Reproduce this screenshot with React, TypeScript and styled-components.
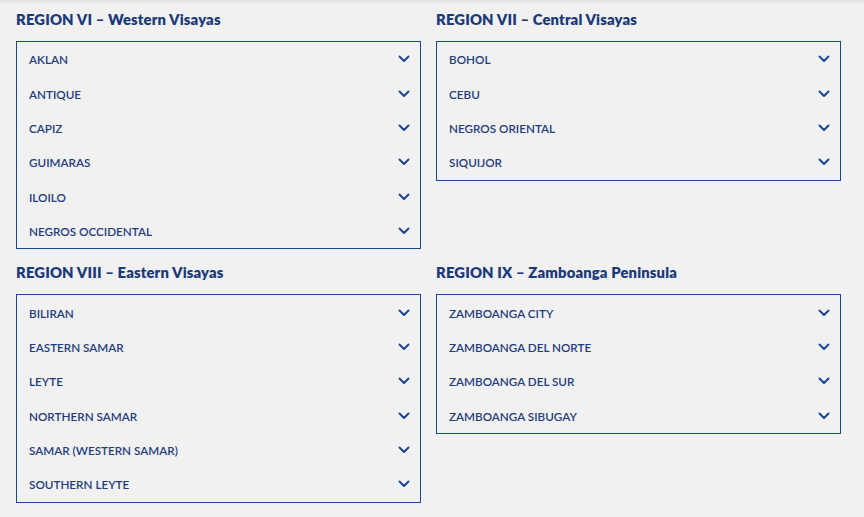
import React from "react";
import styled, { createGlobalStyle } from "styled-components";

const GlobalStyle = createGlobalStyle`
  html, body {
    margin: 0;
    padding: 0;
    background: #f1f1f1;
  }
  body {
    font-family: Lato, "Open Sans", Arial, sans-serif;
  }
`;

const Page = styled.div`
  min-height: 517px;
  box-sizing: border-box;
  padding: 9px 24px 0 16px;
  box-shadow: inset 0 5px 5px -3px rgba(0, 0, 0, 0.08);
`;

const Grid = styled.div`
  display: grid;
  grid-template-columns: 405px 405px;
  column-gap: 15px;
  row-gap: 13px;
  align-items: start;
`;

const Section = styled.section`
  display: flex;
  flex-direction: column;
`;

const Heading = styled.h2`
  margin: 0 0 12px;
  font-size: 14.8px;
  line-height: 20px;
  font-weight: 800;
  color: #1b3a7a;
  letter-spacing: 0.15px;
`;

const List = styled.ul`
  list-style: none;
  margin: 0;
  padding: 0;
  border: 1px solid #1d4694;
`;

const Item = styled.li`
  display: flex;
  align-items: center;
  justify-content: space-between;
  height: 34.4px;
  padding: 0 10px 0 12px;
  font-size: 11.7px;
  font-weight: 600;
  color: #1f3c7d;
  text-transform: uppercase;
  cursor: pointer;
`;

const Chevron = () => (
  <svg width="12" height="8" viewBox="0 0 12 8" fill="none">
    <path d="M1.5 1.5L6 6L10.5 1.5" stroke="#1d4694" strokeWidth="2" strokeLinecap="round" strokeLinejoin="round" />
  </svg>
);

const regions: { title: string; provinces: string[] }[] = [
  {
    title: "REGION VI – Western Visayas",
    provinces: ["Aklan", "Antique", "Capiz", "Guimaras", "Iloilo", "Negros Occidental"],
  },
  {
    title: "REGION VII – Central Visayas",
    provinces: ["Bohol", "Cebu", "Negros Oriental", "Siquijor"],
  },
  {
    title: "REGION VIII – Eastern Visayas",
    provinces: ["Biliran", "Eastern Samar", "Leyte", "Northern Samar", "Samar (Western Samar)", "Southern Leyte"],
  },
  {
    title: "REGION IX – Zamboanga Peninsula",
    provinces: ["Zamboanga City", "Zamboanga del Norte", "Zamboanga del Sur", "Zamboanga Sibugay"],
  },
];

const App: React.FC = () => {
  return (
    <>
      <GlobalStyle />
      <Page>
        <Grid>
          {regions.map((r) => (
            <Section key={r.title}>
              <Heading>{r.title}</Heading>
              <List>
                {r.provinces.map((p) => (
                  <Item key={p}>
                    {p}
                    <Chevron />
                  </Item>
                ))}
              </List>
            </Section>
          ))}
        </Grid>
      </Page>
    </>
  );
};

export default App;
